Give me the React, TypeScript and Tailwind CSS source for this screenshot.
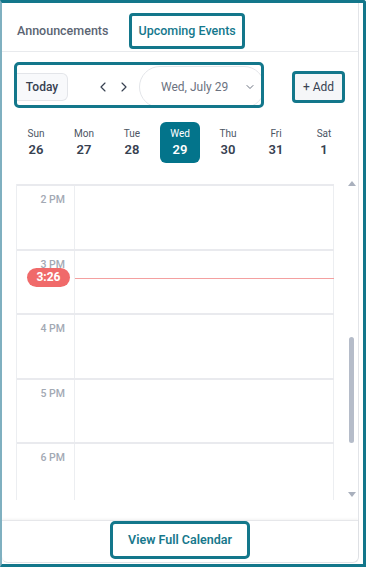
import {ChevronDown, ChevronLeft, ChevronRight} from "lucide-react";

const days = [
	{label: "Sun", num: "26"},
	{label: "Mon", num: "27"},
	{label: "Tue", num: "28"},
	{label: "Wed", num: "29", active: true},
	{label: "Thu", num: "30"},
	{label: "Fri", num: "31"},
	{label: "Sat", num: "1"},
];

const hours = ["2 PM", "3 PM", "4 PM", "5 PM", "6 PM"];

export default function App() {
	return (
		<div className="w-[366px] h-[567px] bg-white border-t-[3px] border-r-[3px] border-b-[3px] border-l-2 border-[#13778b] border-l-[#7fb0c0] rounded-tr-[3px] flex flex-col font-['Roboto',sans-serif] overflow-hidden">
			<div className="flex-1 mr-[4px] mb-[1px] border-r border-b border-[#e2e4e8] rounded-b-md flex flex-col">
				{/* tabs */}
				<div className="h-[49px] shrink-0 border-b border-[#e8eaed] flex items-center pt-[8px] pl-[15px]">
					<span className="text-[12.5px] font-medium text-[#5b6573]">
						Announcements
					</span>
					<div className="ml-[21px] h-[36px] px-[6px] border-[3px] border-[#13778b] rounded-[4px] flex items-center">
						<span className="text-[12.5px] font-medium text-[#15788d]">
							Upcoming Events
						</span>
					</div>
				</div>

				{/* toolbar */}
				<div className="flex items-start pl-[12px] pt-[10px] shrink-0">
					<div className="w-[250px] h-[46px] border-[3px] border-[#13778b] rounded-[5px] overflow-hidden flex items-center pt-[3px]">
						<button className="w-[51px] h-[28px] shrink-0 bg-[#f8f9fb] border border-l-0 border-[#e3e5e9] rounded-r-md text-[12px] font-medium text-[#374151]">
							Today
						</button>
						<ChevronLeft
							size={16}
							strokeWidth={1.75}
							className="ml-[27px] shrink-0 text-[#374151]"
						/>
						<ChevronRight
							size={16}
							strokeWidth={1.75}
							className="ml-[5px] shrink-0 text-[#374151]"
						/>
						<div className="ml-[7px] w-[126px] h-[42px] shrink-0 border border-[#e3e5e9] rounded-full flex items-center pl-[21px] pr-[6px]">
							<span className="text-[12px] text-[#6b7280]">
								Wed, July 29
							</span>
							<ChevronDown
								size={12}
								strokeWidth={2}
								className="ml-auto mr-[2px] text-[#6b7280]"
							/>
						</div>
					</div>
					<div className="ml-[28px] mt-[9px] w-[53px] h-[32px] border-[3px] border-[#13778b] rounded-[4px] bg-[#f5f6f8] flex items-center justify-center">
						<span className="text-[12px] text-[#374151]">+ Add</span>
					</div>
				</div>

				{/* week */}
				<div className="mt-[14px] ml-[10px] w-[336px] grid grid-cols-7 shrink-0">
					{days.map((d) => (
						<div key={d.label} className="flex justify-center">
							<div
								className={
									d.active
										? "w-[40px] h-[41px] rounded-md bg-[#03748b] flex flex-col items-center justify-center gap-[2px] text-white"
										: "w-[40px] h-[41px] rounded-md flex flex-col items-center justify-center gap-[2px] text-[#4b5563]"
								}
							>
								<span className="text-[10px] leading-[12px]">
									{d.label}
								</span>
								<span
									className={
										d.active
											? "text-[13px] leading-[16px] font-semibold"
											: "text-[13px] leading-[16px] font-semibold text-[#374151]"
									}
								>
									{d.num}
								</span>
							</div>
						</div>
					))}
				</div>

				{/* day grid */}
				<div className="mt-[21px] flex pl-[14px] shrink-0">
					<div className="w-[318px] h-[316px] border-l border-[#eceef1] overflow-hidden">
						{hours.map((h, i) => (
							<div
								key={h}
								className="relative flex h-[64.5px] border-t-2 border-[#e9eaee]"
							>
								<div className="w-[58px] shrink-0 border-r border-[#eceef1] pt-[7px] pr-[9px] text-right text-[10.5px] leading-[13px] font-medium text-[#a3a9b4]">
									{h}
								</div>
								<div className="flex-1 border-r border-[#eceef1]" />
								{i === 1 && (
									<>
										<div className="absolute left-[58px] right-0 top-[27px] h-px bg-[#f4a0a0]" />
										<div className="absolute left-[10px] top-[17px] w-[43px] h-[19px] rounded-full bg-[#f06a6a] flex items-center justify-center text-[12px] font-bold text-white">
											3:26
										</div>
									</>
								)}
							</div>
						))}
					</div>

					{/* scrollbar */}
					<div className="ml-[11px] -mt-[3px] w-[13px] flex flex-col items-center">
						<div className="w-0 h-0 border-l-[4px] border-r-[4px] border-b-[5px] border-l-transparent border-r-transparent border-b-[#a9b0bd]" />
						<div className="mt-[151px] w-[5px] h-[106px] rounded-full bg-[#b5bcc9]" />
						<div className="mt-[49px] w-0 h-0 border-l-[4px] border-r-[4px] border-t-[5px] border-l-transparent border-r-transparent border-t-[#a9b0bd]" />
					</div>
				</div>

				{/* footer */}
				<div className="mt-[20px] flex-1 border-t border-[#e6e7ea] shadow-[0_-1px_3px_rgba(0,0,0,0.05)] rounded-b-md flex justify-center items-start">
					<div className="h-[38px] px-[15px] border-[3px] border-[#13778b] rounded-[5px] flex items-center">
						<span className="text-[12.5px] font-semibold text-[#17788c]">
							View Full Calendar
						</span>
					</div>
				</div>
			</div>
		</div>
	);
}
